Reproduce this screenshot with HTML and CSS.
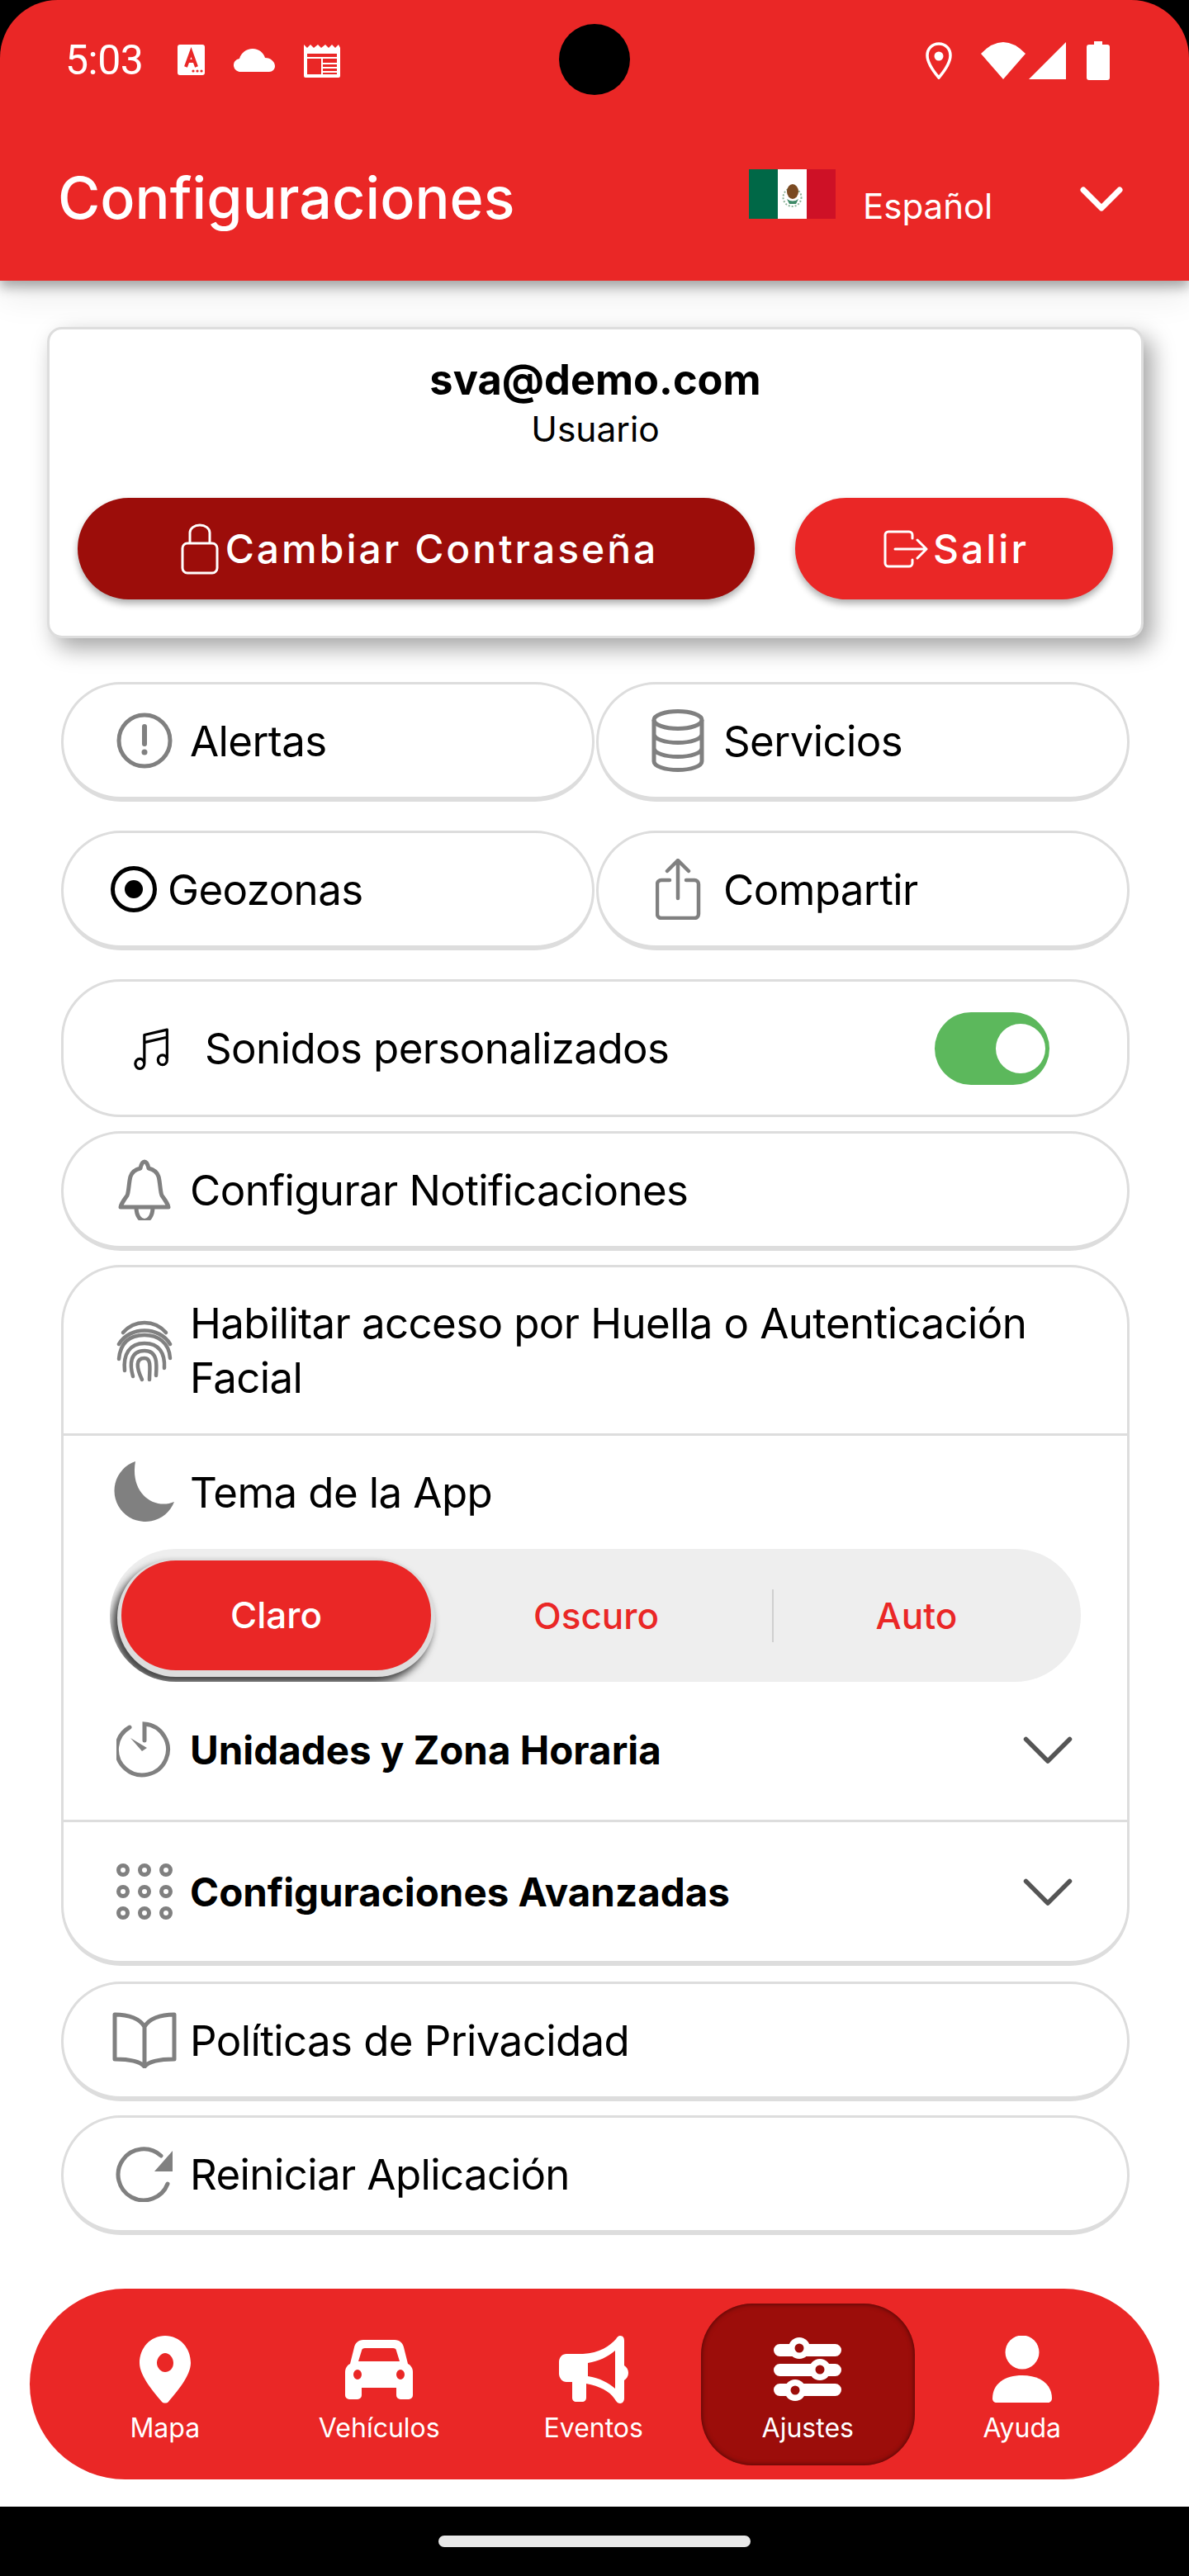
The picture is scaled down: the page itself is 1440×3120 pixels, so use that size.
FILE: index.html
```html
<!DOCTYPE html>
<html lang="es">
<head>
<meta charset="utf-8">
<title>Configuraciones</title>
<link rel="stylesheet" href="styles.css">
</head>
<body>
<div class="screen">
  <header class="top">
    <div class="status">
      <div class="status-left">
        <span class="time">5:03</span>
        <svg class="si" width="34" height="38" viewBox="0 0 34 38"><rect width="33" height="37" rx="3" fill="#fff"/><path d="M10 27 16.500 9 23 27M12.500 20h8" fill="none" stroke="#ea2726" stroke-width="4"/><circle cx="19" cy="32" r="1.600" fill="#ea2726"/><circle cx="24" cy="32" r="1.600" fill="#ea2726"/><circle cx="29" cy="32" r="1.600" fill="#ea2726"/></svg>
        <svg class="si" width="50" height="28" viewBox="0 0 50 28"><path d="M9 28a8 8 0 0 1-2-16C9 5 15 0 23 0c8 0 13 5 15 11 7 0 12 5 12 10 0 4-3 7-7 7z" fill="#fff"/></svg>
        <svg class="si" width="46" height="41" viewBox="0 0 46 41"><path d="M1 1l4 4 4-4 4 4 5-4 4 4 5-4 4 4 4-4 4 4 4-4 2 4v34a2 2 0 0 1-2 2H3a2 2 0 0 1-2-2z" fill="#fff"/><rect x="5" y="12" width="36" height="25" fill="#ea2726"/><rect x="5" y="16" width="36" height="2" fill="#fff"/><rect x="22" y="18" width="2" height="19" fill="#fff"/><rect x="24" y="23" width="17" height="2" fill="#fff"/><rect x="24" y="28" width="17" height="2" fill="#fff"/><rect x="24" y="33" width="17" height="2" fill="#fff"/></svg>
      </div>
      <div class="status-right">
        <svg width="32" height="45" viewBox="0 0 32 45"><path d="M16 2C8 2 2 8 2 16c0 9 8 20 14 27 6-7 14-18 14-27 0-8-6-14-14-14z" fill="none" stroke="#fff" stroke-width="3.500"/><circle cx="16" cy="17" r="5.500" fill="#fff"/></svg>
        <svg class="wifi" width="54" height="45" viewBox="0 0 54 45"><path d="M0 14Q27-14 54 14L27 45z" fill="#fff"/></svg>
        <svg class="signal" width="45" height="45" viewBox="0 0 45 45"><path d="M45 0v45H0z" fill="#fff"/></svg>
        <svg class="batt" width="28" height="47" viewBox="0 0 28 47"><path d="M9 0h10v4h6a3 3 0 0 1 3 3v37a3 3 0 0 1-3 3H3a3 3 0 0 1-3-3V7a3 3 0 0 1 3-3h6z" fill="#fff"/></svg>
      </div>
    </div>
    <div class="titlebar">
      <h1 class="title">Configuraciones</h1>
      <div class="lang">
        <svg class="flag" width="105" height="60" viewBox="0 0 105 60"><rect width="35" height="60" fill="#006847"/><rect x="35" width="35" height="60" fill="#fff"/><rect x="70" width="35" height="60" fill="#ce1126"/><circle cx="52.500" cy="34" r="11" fill="none" stroke="#8fb49a" stroke-width="2" stroke-dasharray="2 2"/><ellipse cx="53" cy="27" rx="7" ry="9" fill="#7a4a22"/><path d="M46 36q7 5 14 0l-3 6h-8z" fill="#3f8a68"/></svg>
        <span class="lang-name">Español</span>
        <svg class="lang-chev" width="52" height="30" viewBox="0 0 52 30"><path d="M4 4l22 22L48 4" fill="none" stroke="#fff" stroke-width="7" stroke-linecap="round" stroke-linejoin="round"/></svg>
      </div>
    </div>
  </header>

  <div class="camera"></div>

  <main class="content">
    <section class="user-card">
      <div class="email">sva@demo.com</div>
      <div class="role">Usuario</div>
      <div class="user-actions">
        <button class="btn btn-dark">
          <svg width="46" height="62" viewBox="0 0 46 62"><path d="M11 24V11a12 9 0 0 1 24 0v13" fill="none" stroke="#fff" stroke-width="3"/><rect x="2" y="24" width="42" height="36" rx="6" fill="none" stroke="#fff" stroke-width="3"/></svg>
          <span>Cambiar Contraseña</span>
        </button>
        <button class="btn btn-red">
          <svg width="54" height="46" viewBox="0 0 54 46"><path d="M35 10V6a4 4 0 0 0-4-4H6a4 4 0 0 0-4 4v34a4 4 0 0 0 4 4h25a4 4 0 0 0 4-4v-4M14 23h37M41 12l11 11-11 11" fill="none" stroke="#fff" stroke-width="3" stroke-linecap="round" stroke-linejoin="round"/></svg>
          <span>Salir</span>
        </button>
      </div>
    </section>

    <div class="pair first">
      <div class="pill">
        <span class="slot"><svg width="68" height="68" viewBox="0 0 68 68"><circle cx="34" cy="34" r="31" fill="none" stroke="#808080" stroke-width="5"/><path d="M34 17v21" stroke="#808080" stroke-width="6" stroke-linecap="round"/><circle cx="34" cy="48" r="3.500" fill="#808080"/></svg></span>
        <span>Alertas</span>
      </div>
      <div class="pill right">
        <span class="slot"><svg width="68" height="76" viewBox="0 0 68 76"><ellipse cx="34" cy="13" rx="29" ry="10.500" fill="none" stroke="#808080" stroke-width="5"/><path d="M5 13v50c0 6 13 10.500 29 10.500s29-4.500 29-10.500V13M5 30c0 6 13 10.500 29 10.500S63 36 63 30M5 47c0 6 13 10.500 29 10.500S63 53 63 47" fill="none" stroke="#808080" stroke-width="5"/></svg></span>
        <span>Servicios</span>
      </div>
    </div>
    <div class="pair">
      <div class="pill geo">
        <svg width="56" height="56" viewBox="0 0 56 56"><circle cx="28" cy="28" r="25.500" fill="none" stroke="#000" stroke-width="5"/><circle cx="28" cy="28" r="11" fill="#000"/></svg>
        <span>Geozonas</span>
      </div>
      <div class="pill right">
        <span class="slot nudge"><svg width="60" height="74" viewBox="0 0 60 74"><path d="M17 26H7a5 5 0 0 0-5 5v36a5 5 0 0 0 5 5h40a5 5 0 0 0 5-5V31a5 5 0 0 0-5-5H37M27 48V3M14 15 27 2l13 13" fill="none" stroke="#808080" stroke-width="4.500" stroke-linecap="round" stroke-linejoin="round"/></svg></span>
        <span>Compartir</span>
      </div>
    </div>

    <div class="sound">
      <svg width="44" height="56" viewBox="0 0 48 56"><path d="M14 47V10L44 3v38M14 20 44 13" fill="none" stroke="#000" stroke-width="3.500" stroke-linejoin="round"/><ellipse cx="8" cy="48" rx="6" ry="6.500" fill="none" stroke="#000" stroke-width="3.500"/><ellipse cx="38" cy="43" rx="6" ry="6.500" fill="none" stroke="#000" stroke-width="3.500"/></svg>
      <span class="sound-label">Sonidos personalizados</span>
      <span class="switch"><span class="knob"></span></span>
    </div>

    <div class="pill wide">
      <span class="slot"><svg width="64" height="74" viewBox="0 0 64 74"><path d="M3 58c0-2 5-10 8-14 2-4 2-16 4-23 2-6 8-9 12-10 1-5 3-8 5-8s4 3 5 8c4 1 10 4 12 10 2 7 2 19 4 23 3 4 8 12 8 14zM22 58c0 22 20 22 20 0" fill="none" stroke="#808080" stroke-width="5" stroke-linejoin="round"/></svg></span>
      <span>Configurar Notificaciones</span>
    </div>

    <section class="group">
      <div class="row g-finger">
        <span class="slot"><svg width="68" height="78" viewBox="0 0 68 76"><g fill="none" stroke="#808080" stroke-width="4.500" stroke-linecap="round"><path d="M8 16C22 0 46 0 60 16"/><path d="M3 30C16 8 52 8 65 30"/><path d="M3 48C5 26 18 19 34 19s30 9 31 28"/><path d="M10 62C8 42 16 29 34 29s25 12 24 30"/><path d="M20 69c-4-14-4-31 14-31 16 0 15 16 14 30"/><path d="M31 73c-7-15-8-26 3-26 9 0 6 14 6 26"/></g></svg></span>
        <span>Habilitar acceso por Huella o Autenticación Facial</span>
      </div>
      <div class="g-theme">
        <div class="row theme-head">
          <span class="slot"><svg width="76" height="76" viewBox="0 0 76 76"><path d="M27 1A37.500 37.500 0 1 0 74 50C50 60 20 40 27 1z" fill="#808080"/></svg></span>
          <span>Tema de la App</span>
        </div>
        <div class="segment">
          <span class="seg-on">Claro</span>
          <span class="seg seg-a">Oscuro</span>
          <span class="seg-sep"></span>
          <span class="seg seg-b">Auto</span>
        </div>
        <div class="row acc acc-mid">
          <span class="slot"><svg width="68" height="68" viewBox="0 0 68 68"><path d="M16 7A31 31 0 1 0 34 3v20" fill="none" stroke="#808080" stroke-width="5" stroke-linecap="round"/><path d="M17 20l14 16 6-4z" fill="#808080"/></svg></span>
          <strong>Unidades y Zona Horaria</strong>
          <svg class="acc-chev" width="60" height="34" viewBox="0 0 60 34"><path d="M3.500 3.500l26.500 26.500L56.500 3.500" fill="none" stroke="#555" stroke-width="5.500" stroke-linecap="round" stroke-linejoin="round"/></svg>
        </div>
      </div>
      <div class="row acc acc-last">
        <span class="slot"><svg width="68" height="68" viewBox="0 0 68 68"><g fill="none" stroke="#808080" stroke-width="5"><circle cx="8" cy="8" r="5.500"/><circle cx="34" cy="8" r="5.500"/><circle cx="60" cy="8" r="5.500"/><circle cx="8" cy="34" r="5.500"/><circle cx="34" cy="34" r="5.500"/><circle cx="60" cy="34" r="5.500"/><circle cx="8" cy="60" r="5.500"/><circle cx="34" cy="60" r="5.500"/><circle cx="60" cy="60" r="5.500"/></g></svg></span>
        <strong>Configuraciones Avanzadas</strong>
        <svg class="acc-chev" width="60" height="34" viewBox="0 0 60 34"><path d="M3.500 3.500l26.500 26.500L56.500 3.500" fill="none" stroke="#555" stroke-width="5.500" stroke-linecap="round" stroke-linejoin="round"/></svg>
      </div>
    </section>

    <div class="pill wide">
      <span class="slot"><svg width="78" height="68" viewBox="0 0 78 68"><path d="M39 18C34 8 20 3 3 3v54c16 0 30 2 36 9 6-7 20-9 36-9V3C58 3 44 8 39 18zM39 18v48" fill="none" stroke="#808080" stroke-width="5" stroke-linejoin="round"/></svg></span>
      <span>Políticas de Privacidad</span>
    </div>
    <div class="pill wide">
      <span class="slot"><svg width="72" height="68" viewBox="0 0 72 68"><path d="M56 12A31 31 0 1 0 64 46" fill="none" stroke="#808080" stroke-width="5" stroke-linecap="round"/><path d="M70 6v25H48z" fill="#808080"/></svg></span>
      <span>Reiniciar Aplicación</span>
    </div>
  </main>

  <nav class="nav">
    <div class="nav-item">
      <svg width="62" height="82" viewBox="0 0 62 82"><path fill-rule="evenodd" d="M31 0C13 0 0 15 0 33c0 16 18 36 27 47 2 2 6 2 8 0 9-11 27-31 27-47C62 15 49 0 31 0zm0 21c5 0 10 5 10 12s-5 11-10 11-10-5-10-11 5-12 10-12z" fill="#fff"/></svg>
      <span>Mapa</span>
    </div>
    <div class="nav-item">
      <svg width="82" height="72" viewBox="0 0 82 72"><path fill-rule="evenodd" d="M22 0h38c6 0 10 4 11 9l5 20c4 2 6 6 6 10v28a5 5 0 0 1-5 5h-10a5 5 0 0 1-5-5V58H20v9a5 5 0 0 1-5 5H5a5 5 0 0 1-5-5V39c0-4 2-8 6-10l5-20C12 4 16 0 22 0zm2 10c-2 0-4 1-4 3l-4 13h50l-4-13c0-2-2-3-4-3zM15 36a5 6 0 1 0 0 12 5 6 0 0 0 0-12zm52 0a5 6 0 1 0 0 12 5 6 0 0 0 0-12z" fill="#fff"/></svg>
      <span>Vehículos</span>
    </div>
    <div class="nav-item">
      <svg width="84" height="82" viewBox="0 0 84 82"><path fill-rule="evenodd" d="M74 0c4 0 5 3 5 6v30c3 2 5 5 5 9s-2 7-5 9v22c0 3-2 6-5 6-3 0-5-3-7-6-6-9-18-15-34-18v17c0 3-2 5-5 5h-7c-3 0-5-2-5-5V56H9c-5 0-9-5-9-10V32c0-6 4-10 9-10h20c20-1 33-10 40-18 1-2 3-4 5-4zM68 18c-8 7-20 13-33 15v16c14 2 25 8 33 15z" fill="#fff"/></svg>
      <span>Eventos</span>
    </div>
    <div class="nav-item nav-on">
      <svg width="82" height="78" viewBox="0 0 82 78"><g fill="#fff" fill-rule="evenodd"><rect y="8" width="82" height="15" rx="7.500"/><rect y="32" width="82" height="15" rx="7.500"/><rect y="56" width="82" height="15" rx="7.500"/><circle cx="31" cy="13" r="13"/><circle cx="56" cy="39" r="13"/><circle cx="26" cy="64" r="13"/></g><circle cx="31" cy="13" r="5.500" fill="#9c0d0a"/><circle cx="56" cy="39" r="5.500" fill="#9c0d0a"/><circle cx="26" cy="64" r="5.500" fill="#9c0d0a"/></svg>
      <span>Ajustes</span>
    </div>
    <div class="nav-item">
      <svg width="72" height="82" viewBox="0 0 72 82"><ellipse cx="36" cy="20" rx="20.500" ry="20.500" fill="#fff"/><path d="M0 76C0 58 15 48 36 48s36 10 36 28c0 3-2 5-5 5H5c-3 0-5-2-5-5z" fill="#fff"/></svg>
      <span>Ayuda</span>
    </div>
  </nav>

  <footer class="homebar"><span class="home-ind"></span></footer>
</div>
</body>
</html>
```
FILE: styles.css
```css
* { box-sizing: border-box; }
html, body { margin: 0; padding: 0; }
body { width: 1440px; height: 3120px; background: #000; font-family: "Inter", "Noto Sans", sans-serif; color: #000; overflow: hidden; }
.screen { position: relative; width: 1440px; height: 3120px; display: flex; flex-direction: column; background: #000; overflow: hidden; }

.top { position: relative; z-index: 2; height: 340px; background: #ea2726; border-radius: 70px 70px 0 0; box-shadow: 0 8px 14px rgba(0,0,0,.3), 0 20px 40px rgba(0,0,0,.08); color: #fff; padding: 48px 80px 0 80px; flex: none; }
.status { display: flex; justify-content: space-between; align-items: center; height: 50px; }
.status-left { display: flex; align-items: center; gap: 34px; }
.status-right { display: flex; align-items: center; margin-right: 16px; }
.status-right .wifi { margin-left: 35px; }
.status-right .signal { margin-left: 4px; }
.status-right .batt { margin-left: 25px; }
.time { font-family: "Roboto", sans-serif; font-size: 50px; letter-spacing: -.5px; line-height: 50px; font-weight: 400; margin-left: -1px; margin-right: 11px; width: 91px; white-space: nowrap; }
.camera { position: absolute; z-index: 3; left: 677px; top: 29px; width: 86px; height: 86px; border-radius: 50%; background: #000; }

.titlebar { display: flex; justify-content: space-between; align-items: flex-start; margin-top: 100px; margin-left: -10px; }
.title { margin: 0; font-size: 70px; line-height: 84px; font-weight: 500; color: #fff; }
.lang { display: flex; align-items: flex-start; width: 454px; margin-right: -1px; }
.flag { margin-top: 7px; flex: none; }
.lang-name { font-size: 42px; line-height: 60px; margin-left: 33px; margin-top: 22px; width: 263px; }
.lang-chev { margin-top: 28px; flex: none; }

.content { flex: 1; background: #fff; padding: 56px 72px 0 74px; display: flex; flex-direction: column; position: relative; z-index: 1; }

.user-card { flex: none; width: 1328px; height: 377px; margin-left: -17px; background: #fff; border: 3px solid #ddd; border-radius: 18px; box-shadow: 10px 12px 28px rgba(0,0,0,.36); padding: 30px 34px 0 34px; text-align: center; }
.email { font-size: 50.500px; line-height: 62px; font-weight: 700; }
.role { font-size: 42.500px; line-height: 52px; font-weight: 400; margin-top: 3px; }
.user-actions { display: flex; justify-content: space-between; margin-top: 57px; }
.btn { height: 123px; border: 0; border-radius: 62px; color: #fff; font-family: inherit; font-size: 48px; font-weight: 500; letter-spacing: 3px; display: flex; align-items: center; justify-content: center; gap: 8px; box-shadow: 0 5px 9px rgba(0,0,0,.32); padding: 0; }
.btn-dark { width: 820px; background: #9c0d0a; padding-left: 8px; }
.btn-red { width: 385px; background: #ea2726; gap: 6px; padding-left: 5px; }

.pair { flex: none; display: flex; gap: 2px; margin-top: 35px; width: 1294px; }
.pair.first { margin-top: 53px; }
.slot { flex: none; width: 88px; display: flex; justify-content: center; align-items: center; }
.slot.nudge { padding-left: 6px; }
.pill { flex: none; display: flex; align-items: center; height: 145px; width: 646px; background: #fff; border: 3px solid #ddd; border-bottom-width: 6px; border-radius: 72px; font-size: 51px; letter-spacing: -.6px; padding-left: 54px; gap: 11px; }
.pill.right { padding-left: 52px; }
.pill.wide { width: 1294px; margin-top: 17px; }
.group + .pill.wide { margin-top: 19px; }
.pill.geo { padding-left: 57px; gap: 13px; }

.sound { flex: none; display: flex; align-items: center; height: 167px; width: 1294px; margin-top: 35px; border: 3px solid #ddd; border-radius: 72px; padding-left: 85px; font-size: 51px; letter-spacing: -.6px; }
.sound-label { margin-left: 42px; flex: 1; }
.switch { display: flex; align-items: center; justify-content: flex-end; width: 139px; height: 88px; background: #5cb85c; border-radius: 44px; padding-right: 5px; margin-right: 94px; }
.knob { width: 60px; height: 60px; border-radius: 50%; background: #fff; }

.group { flex: none; width: 1294px; margin-top: 17px; border: 3px solid #ddd; border-bottom-width: 6px; border-radius: 72px; background: #fff; }
.row { display: flex; align-items: center; gap: 11px; padding-left: 54px; }
.g-finger { height: 201px; padding-right: 90px; font-size: 51px; letter-spacing: -.6px; line-height: 66px; }
.g-theme { height: 471px; border-top: 3px solid #ddd; border-bottom: 3px solid #ddd; padding-top: 20px; }
.theme-head { height: 96px; font-size: 51px; letter-spacing: -.6px; }
.segment { position: relative; display: flex; align-items: center; height: 161px; margin: 21px 56px 0 56px; background: #eee; border-radius: 80px; color: #ea2726; font-size: 44px; font-weight: 500; overflow: hidden; }
.seg-on { flex: none; width: 375px; height: 133px; margin-left: 14px; line-height: 133px; text-align: center; background: #ea2726; color: #fff; border-radius: 66px; box-shadow: 0 3px 0 5px #ddd, -5px 10px 10px 6px rgba(0,0,0,.7); position: relative; }
.seg { text-align: center; }
.seg-a { width: 400px; }
.seg-b { width: 346px; }
.seg-sep { width: 2px; height: 64px; margin-left: 13px; background: #cfcfcf; }
.acc { font-size: 47.500px; padding-right: 66px; }
.acc-mid { height: 164px; }
.acc-last { height: 168px; }
.acc strong { flex: 1; font-weight: 700; }
.acc-chev { flex: none; margin-top: 2px; }

.nav { position: absolute; z-index: 2; left: 36px; top: 2772px; width: 1368px; height: 231px; background: #ea2726; border-radius: 116px; display: flex; padding: 18px 0 0 34px; }
.nav-item { width: 259.500px; height: 196px; display: flex; flex-direction: column; align-items: center; padding-top: 39px; color: #fff; font-size: 32px; line-height: 36px; border-radius: 62px; }
.nav-item svg { flex: none; height: 82px; }
.nav-item span { margin-top: 12px; }
.nav-on { background: #9c0d0a; box-shadow: inset 0 0 6px rgba(0,0,0,.6); }

.homebar { position: absolute; z-index: 2; left: 0; top: 3036px; width: 1440px; height: 84px; background: #000; display: flex; justify-content: center; padding-top: 35px; }
.home-ind { width: 378px; height: 14px; border-radius: 7px; background: #e8e8e8; }
```
